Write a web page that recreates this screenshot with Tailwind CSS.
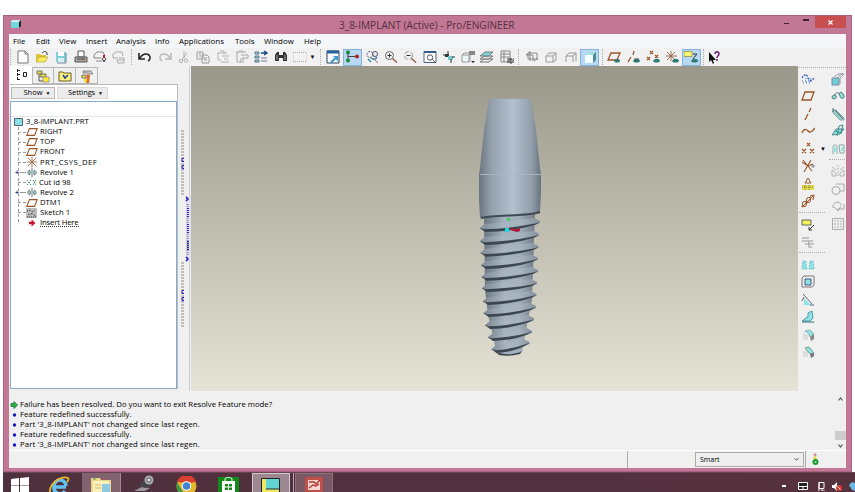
<!DOCTYPE html>
<html lang="en">
<head>
    <meta charset="UTF-8">
    <meta name="viewport" content="width=device-width, initial-scale=1.0">
    <title>3_8-IMPLANT (Active) - Pro/ENGINEER</title>
    <script src="https://cdn.jsdelivr.net/npm/@tailwindcss/browser@4"></script>
</head>
<body class="w-[855px] h-[492px] overflow-hidden bg-white pl-[3px] pt-[15px] font-['Open_Sans',sans-serif] text-[7.5px] leading-none text-black">
    <!-- Shared icons -->
    <svg class="hidden">
        <symbol id="plane" viewBox="0 0 14 14"><path d="M4 3h9l-3 8H1z" fill="none" stroke="#9a5528" stroke-width="1.3"/></symbol>
        <symbol id="revolve" viewBox="0 0 14 14"><path d="M7 1v12M4 4c-3 1-3 5 0 6l1-3zM10 4c3 1 3 5 0 6l-1-3z" fill="#a5dcdc" stroke="#42565a"/></symbol>
        <symbol id="csys" viewBox="0 0 14 14"><path d="M7 1v12M1 7h12M2 2l10 10M12 2L2 12" fill="none" stroke="#9a6040"/></symbol>
    </svg>

    <div class="w-[849px] h-[457px] bg-[#c27794] border border-[#a9617f] px-[5px]">
        <!-- Title bar -->
        <div class="flex h-[18px] relative">
            <svg class="w-[10px] h-[8px] mt-[4px] ml-[2px]" viewBox="0 0 10 8"><path d="M0 1h8v7H0z" fill="#6fd7da"/><path d="M0 1L2 0h8L8 2H0z" fill="#c8f2f2"/><path d="M8 2l2-2v6L8 8z" fill="#222"/></svg>
            <span class="absolute left-[330px] top-[4px] text-[10.1px] text-[#54303f] whitespace-nowrap">3_8-IMPLANT (Active) - Pro/ENGINEER</span>
            <div class="flex ml-auto mr-0">
                <span class="w-[5px] h-[1px] bg-[#402030] mt-[7px] mr-[14px]"></span>
                <span class="w-[6px] h-[2px] bg-[#402030] mt-[3px] mr-[6px]"></span>
                <span class="w-[31px] h-[12px] bg-[#c84f50] flex items-center justify-center">
                    <svg class="w-[5px] h-[5px]" viewBox="0 0 5 5"><path d="M.5.5l4 4M4.500.5l-4 4" stroke="#fff" stroke-width="1.2"/></svg>
                </span>
            </div>
        </div>

        <div class="w-[837px] h-[434px] bg-[#f0f0f0] flex flex-col">
            <!-- Menu -->
            <nav class="flex h-[14px] items-center bg-[#f5f6f8] pl-[4px] pt-px text-[7.9px] shrink-0">
                <span class="w-[23px]">File</span>
                <span class="w-[23px]">Edit</span>
                <span class="w-[27px]">View</span>
                <span class="w-[30px]">Insert</span>
                <span class="w-[39px]">Analysis</span>
                <span class="w-[24px]">Info</span>
                <span class="w-[56px]">Applications</span>
                <span class="w-[29px]">Tools</span>
                <span class="w-[40px]">Window</span>
                <span>Help</span>
            </nav>

            <!-- Toolbar -->
            <div class="flex h-[18px] items-center pl-px shrink-0 bg-[#f1f1f1] [&_svg]:w-[14px] [&_svg]:h-[14px] [&_svg]:shrink-0 [&_svg]:fill-none">
                <div class="h-[16px] w-[3px] border-l border-dotted border-[#aaa]"></div>
                <div class="grid grid-flow-col auto-cols-[19.3px] justify-items-center items-center">
                    <svg viewBox="0 0 14 14" stroke="#777"><path d="M2 1h7l3 3v9H2z" fill="#fff"/><path d="M9 1v3h3"/></svg>
                    <svg viewBox="0 0 14 14"><path d="M1 4h4l1 1h5v7H1z" fill="#e0c43c"/><path d="M1 12l3-5h9l-3 5z" fill="#f7ec5c" stroke="#b09a30" stroke-width=".6"/><path d="M7 3c2-2 4-2 5 0v2" stroke="#333"/></svg>
                    <svg viewBox="0 0 14 14"><path d="M2 2h10v10H2z" fill="#7ecfd6"/><path d="M4 2h6v4H4z" fill="#fff"/><path d="M4 8h6v4H4z" fill="#d8eef0"/><path d="M12 3v10H3" stroke="#789"/></svg>
                    <svg viewBox="0 0 14 14"><path d="M4 1h6v6H4z" fill="#fff" stroke="#555"/><path d="M1 7h12v5H1z" fill="#aaa" stroke="#555"/><path d="M3 9h8" stroke="#444"/><path d="M8 10h3" stroke="#c55"/></svg>
                    <svg viewBox="0 0 14 14"><path d="M1 5l3-3h6l2 4M1 5v3h7M3 11h6" stroke="#888"/><path d="M11 5v3" stroke="#b02020" stroke-width="2"/><path d="M9 8l2 4 2-4" stroke="#333"/></svg>
                    <svg viewBox="0 0 14 14" stroke="#aaa"><path d="M1 4l3-2h6l1 4M1 4v4h5M5 10h7v3H6zM7 8h5v2"/></svg>
                </div>
                <div class="h-[16px] w-[5px] ml-[2px] border-l border-dotted border-[#aaa]"></div>
                <div class="grid grid-flow-col auto-cols-[19.3px] justify-items-center items-center">
                    <svg viewBox="0 0 14 14"><path d="M1 3v6h6M2 8c2-4 6-5 9-3 2 2 1 5-1 6" stroke="#222" stroke-width="1.600"/></svg>
                    <svg viewBox="0 0 14 14"><path d="M13 3v6H7M12 8c-2-4-6-5-9-3-2 2-1 5 1 6" stroke="#b8b8b8" stroke-width="1.500"/></svg>
                    <svg viewBox="0 0 14 14" stroke="#b0b0b0"><path d="M7 1v7M10 3L5 10"/><circle cx="4" cy="11" r="1.700"/><circle cx="9" cy="10.500" r="1.700"/></svg>
                    <svg viewBox="0 0 14 14" stroke="#9c9c9c"><path d="M1 2h6v7H1zM6 5h5l2 2v6H6z" fill="#eee"/><path d="M8 8h3M8 10h3M3 4h2M3 6h2"/></svg>
                    <svg viewBox="0 0 14 14" stroke="#b4b4b4"><path d="M1 3h10M4 1h4v3M2 3v7h3M6 6h7M5 12h8M8 9h4"/></svg>
                    <svg viewBox="0 0 14 14" stroke="#a8a8a8"><path d="M1 2h10M2 2v10h4M6 5h7v3H7M6 8v5M8 8v5M4 1h4"/></svg>
                    <svg viewBox="0 0 14 14"><path d="M1 2h4v2H1zM1 6h4v2H1zM1 10h4v2H1z" fill="#9cd8dc" stroke="#578"/><path d="M7 3h5M10 1l3 2-3 2" stroke="#224a88" stroke-width="1.400"/><path d="M7 8h6M7 11h6" stroke="#779"/></svg>
                    <svg viewBox="0 0 14 14"><path d="M1 5l2-3h2v3h4V2h2l2 3v6H9V8H5v3H1z" fill="#333"/><path d="M3 5v5M11 5v5" stroke="#aaa"/></svg>
                    <svg viewBox="0 0 14 14"><path d="M0 2.500h14v9H0z" stroke="#aaa" stroke-dasharray="1 1"/></svg>
                </div>
                <div class="w-[11px] text-[6px] text-black">▼</div>
                <div class="h-[16px] w-[3px] border-l border-dotted border-[#aaa]"></div>
                <div class="grid grid-flow-col auto-cols-[19.3px] h-[18px] justify-items-center items-center">
                    <svg viewBox="0 0 14 14"><path d="M1 1h12v12H1z" fill="#f7fbff" stroke="#346"/><path d="M1 2h12" stroke="#2763a0" stroke-width="3"/><path d="M4 12l5-5-3-1h6v6l-2-3-4 4z" fill="#3c98cc"/></svg>
                    <div class="w-[19px] h-[17px] bg-[#b7d7f3] border border-[#84b3dc] grid place-items-center"><svg viewBox="0 0 14 14"><path d="M3 2v8M3 6.500h8" stroke="#444"/><circle cx="3" cy="2.500" r="2" fill="#178a36"/><circle cx="3" cy="10.500" r="2" fill="#178a36"/><circle cx="12" cy="6.500" r="2" fill="#b02222"/></svg></div>
                    <svg viewBox="0 0 14 14"><circle cx="5" cy="4.500" r="3" stroke="#557" stroke-dasharray="2 1"/><circle cx="10" cy="4" r="2.500" stroke="#557"/><path d="M3 9l3 3M6 8c3 2 4 2 6-1" stroke="#3888b8" stroke-width="1.500"/><path d="M8 8l5 5" stroke="#a77"/></svg>
                    <svg viewBox="0 0 14 14"><circle cx="5.500" cy="5.500" r="4" stroke="#666"/><path d="M3.500 5.500h4M5.500 3.500v4" stroke="#333"/><path d="M8.500 8.500l4.500 4" stroke="#97604c" stroke-width="1.500"/></svg>
                    <svg viewBox="0 0 14 14"><circle cx="5.500" cy="5.500" r="4" stroke="#999" stroke-dasharray="5 2"/><path d="M3.500 5.500h4" stroke="#333"/><path d="M8.500 8.500l4.500 4" stroke="#97604c" stroke-width="1.500"/></svg>
                    <svg viewBox="0 0 14 14"><path d="M1 1.500h12v11H1z" fill="#fff" stroke="#456688"/><path d="M1 2h12" stroke="#345c88" stroke-width="2"/><circle cx="7" cy="7.500" r="2.700" stroke="#555"/><path d="M9 9l4 4" stroke="#97604c"/></svg>
                    <svg viewBox="0 0 14 14"><path d="M3 4h4v3H3z" fill="#244"/><path d="M6 6h5v4H6z" fill="#74c8c8"/><path d="M6 1v4M9 9v4M1 5h3M13 7h-3" stroke="#333"/></svg>
                    <svg viewBox="0 0 14 14"><path d="M1 5h7v7H1z" fill="#e9f7f7" stroke="#999"/><path d="M1 5l2-2h6v7l-1 2" stroke="#999"/><path d="M8 1h6v4H8z" fill="#888"/><path d="M10 11h4l-2 2z" fill="#222"/></svg>
                    <svg viewBox="0 0 14 14" stroke="#777"><path d="M0 12l4-3h9l-4 3z" fill="#eee"/><path d="M0 9l4-3h9l-4 3z" fill="#ddd"/><path d="M0 6l5-4h8L9 6z" fill="#7ed4da"/></svg>
                    <svg viewBox="0 0 14 14" stroke="#888"><path d="M1 1h9v11H1zM1 4h9M1 7h9M4 1v11"/><path d="M8 8v5M10 8v5h2V9h-2M14 8v5" stroke="#333"/></svg>
                </div>
                <div class="h-[16px] w-[4px] ml-[2px] border-l border-dotted border-[#aaa]"></div>
                <div class="grid grid-flow-col auto-cols-[19.3px] h-[18px] justify-items-center items-center">
                    <svg viewBox="0 0 14 14" stroke="#888"><path d="M1 5h7v6M3 3v6h10M3 3h9v7M5 1v10M1 5l3-3M9 11l3-2"/></svg>
                    <svg viewBox="0 0 14 14" stroke="#999"><path d="M2 6h7v6H2zM2 6l3-3h7v7l-3 2M9 6l3-3"/></svg>
                    <svg viewBox="0 0 14 14" stroke="#999"><path d="M2 12V6h7v6M2 6l3-3h7M9 6l3-3v8"/></svg>
                    <div class="w-[19px] h-[17px] bg-[#b7d7f3] border border-[#84b3dc] grid place-items-center"><svg viewBox="0 0 14 14"><path d="M2 5h8v8H2z" fill="#f2ffff"/><path d="M2 5l3-3h8l-3 3z" fill="#a4dede"/><path d="M10 5l3-3v8l-3 3z" fill="#4d8c96"/></svg></div>
                </div>
                <div class="h-[16px] w-[3px] ml-[2px] border-l border-dotted border-[#aaa]"></div>
                <div class="grid grid-flow-col auto-cols-[19.3px] h-[18px] justify-items-center items-center">
                    <svg viewBox="0 0 14 14"><path d="M4 3h9l-3 7H1z" stroke="#9a5528" stroke-width="1.300"/><path d="M7 11c2-3 5-3 6 0-1 2-5 2-6 0z" fill="#287a72"/></svg>
                    <svg viewBox="0 0 14 14"><path d="M7 1L6 5M4 7l-3 5" stroke="#9a5528" stroke-width="1.300"/><path d="M6 11c2-3 6-3 7 0-1 2-6 2-7 0z" fill="#287a72"/><path d="M7 9h5" stroke="#555"/></svg>
                    <svg viewBox="0 0 14 14"><path d="M4 1l3 3M7 1L4 4M1 7l3 3M4 7l-3 3M9 5l3 3M12 5L9 8" stroke="#9a5528" stroke-width="1.200"/><path d="M7 11c2-3 6-3 7 0-1 2-6 2-7 0z" fill="#287a72"/></svg>
                    <svg viewBox="0 0 14 14"><path d="M6 1v10M1 6h11M2 2l8 8M10 2l-8 8" stroke="#9a6a50"/><path d="M7 11c2-3 6-3 7 0-1 2-6 2-7 0z" fill="#287a72"/></svg>
                    <div class="w-[19px] h-[17px] bg-[#b7d7f3] border border-[#84b3dc] grid place-items-center"><svg viewBox="0 0 14 14"><path d="M0 1.500h8v5H0z" fill="#fdf870" stroke="#8a8440" stroke-width=".7"/><path d="M9 4h4L9 9" stroke="#333"/><path d="M7 11c2-3 6-3 7 0-1 2-6 2-7 0z" fill="#287a72"/></svg></div>
                </div>
                <div class="h-[16px] w-[4px] ml-[2px] border-l border-dotted border-[#aaa]"></div>
                <svg viewBox="0 0 14 14"><path d="M2 2v10l2-2 2 4 1-1-1-3h3z" fill="#111"/><path d="M8 4c0-3 4-3 4 0 0 2-2 1.500-2 4M10 9v2" stroke="#70207a" stroke-width="1.500"/></svg>
            </div>

            <!-- Work area -->
            <div class="flex h-[325px] shrink-0">
                <!-- Model tree -->
                <aside class="w-[170px] pl-[1px] pr-px shrink-0">
                    <div class="flex h-[18px] items-end [&_svg]:w-[14px] [&_svg]:h-[14px] [&_svg]:fill-none">
                        <div class="w-[22px] h-[18px] bg-white grid place-items-center"><svg viewBox="0 0 14 14" stroke="#222"><path d="M3.500 1v12M3 2.500h4M3 6.500h4M3 11.500h4" stroke-dasharray="3 1"/><path d="M9.500 4.500h3v4h-3z"/></svg></div>
                        <div class="w-[22px] h-[17px] border border-[#b8b8b8] grid place-items-center"><svg viewBox="0 0 14 14"><path d="M1 2h5v3H1zM4 5h6v3H4z" fill="#e4d648" stroke="#776"/><path d="M7 8h6v5H7z" fill="#f8ec32" stroke="#a98"/><path d="M3 6v6h4" stroke="#555"/></svg></div>
                        <div class="w-[22px] h-[17px] border border-l-0 border-[#b8b8b8] grid place-items-center"><svg viewBox="0 0 14 14"><path d="M1 3h4l1 1h7v8H1z" fill="#f9f17a" stroke="#665c20"/><path d="M5 6l2 3 3-3" stroke="#2038a0" stroke-width="1.500"/></svg></div>
                        <div class="w-[22px] h-[17px] border border-l-0 border-[#b8b8b8] grid place-items-center"><svg viewBox="0 0 14 14"><path d="M3 2h8l2 3h-3L8 4H3z" fill="#ccc" stroke="#666" stroke-width=".7"/><path d="M2 6h4v3H2z" fill="#eadb42" stroke="#776"/><path d="M7 5l3 1-1 8H6z" fill="#e0682a"/><path d="M4 10h3v3H4z" fill="#f5da30"/></svg></div>
                    </div>
                    <div class="h-[305px] w-[168px] bg-white border-t border-r border-[#bbb] flex flex-col">
                        <div class="flex gap-[2px] pl-px pt-[2px] pb-[2px]">
                            <div class="w-[44px] h-[12px] bg-[#ececec] border border-[#b9b9b9] flex items-center justify-center gap-[3px] pl-[8px]">Show <span class="text-[5px]">▼</span></div>
                            <div class="w-[51px] h-[12px] bg-[#ececec] border border-[#dadada] flex items-center justify-center gap-[3px] pl-[6px] tracking-[-0.1px]">Settings <span class="text-[5px]">▼</span></div>
                        </div>
                        <div class="flex-1 w-[167px] border border-[#86acd0]">
                            <div class="h-[15px] border-b border-[#e3e7ec]"></div>
                            <ul class="relative text-[7.7px] [&_li]:flex [&_li]:items-center [&_li]:h-[10.1px] [&_li]:whitespace-nowrap [&_svg]:shrink-0">
                                <div class="absolute left-[7px] top-[10px] h-[95px] border-l border-dashed border-[#999]"></div>
                                <li class="pl-[3px]"><svg class="w-[9px] h-[8px] mr-[3px]" viewBox="0 0 9 8"><path d="M.5.5h8v7h-8z" fill="#8de0e4" stroke="#456870"/></svg>3_8-IMPLANT.PRT</li>
                                <li class="pl-[7px]"><i class="w-[8px] border-t border-dashed border-[#999]"></i><svg class="w-[12px] h-[12px] mr-[2px]"><use href="#plane"/></svg>RIGHT</li>
                                <li class="pl-[7px]"><i class="w-[8px] border-t border-dashed border-[#999]"></i><svg class="w-[12px] h-[12px] mr-[2px]"><use href="#plane"/></svg>TOP</li>
                                <li class="pl-[7px]"><i class="w-[8px] border-t border-dashed border-[#999]"></i><svg class="w-[12px] h-[12px] mr-[2px]"><use href="#plane"/></svg>FRONT</li>
                                <li class="pl-[7px] tracking-[0.45px]"><i class="w-[8px] border-t border-dashed border-[#999]"></i><svg class="w-[12px] h-[12px] mr-[2px]"><use href="#csys"/></svg>PRT_CSYS_DEF</li>
                                <li class="pl-[4px]"><b class="text-[7px] w-[5px] text-[#2a2a80]">+</b><i class="w-[6px] border-t border-dashed border-[#999]"></i><svg class="w-[12px] h-[11px] mr-[2px]"><use href="#revolve"/></svg>Revolve 1</li>
                                <li class="pl-[7px]"><i class="w-[8px] border-t border-dashed border-[#999]"></i><svg class="w-[12px] h-[9px] mr-px" viewBox="0 0 12 9"><path d="M1 2l4 5M5 2L1 7M7 2l3 5M10 2L7 7" stroke="#388078" stroke-dasharray="1.500 1"/></svg>Cut id 98</li>
                                <li class="pl-[4px]"><b class="text-[7px] w-[5px] text-[#2a2a80]">+</b><i class="w-[6px] border-t border-dashed border-[#999]"></i><svg class="w-[12px] h-[11px] mr-[2px]"><use href="#revolve"/></svg>Revolve 2</li>
                                <li class="pl-[7px]"><i class="w-[8px] border-t border-dashed border-[#999]"></i><svg class="w-[12px] h-[12px] mr-[2px]"><use href="#plane"/></svg>DTM1</li>
                                <li class="pl-[7px]"><i class="w-[8px] border-t border-dashed border-[#999]"></i><svg class="w-[11px] h-[10px] mr-[3px]" viewBox="0 0 11 10"><path d="M0 0h11v10H0z" fill="#bbb"/><path d="M1 3l3-1 2 2 3-2M2 6l2 1 2-2 3 3M1 9h9" stroke="#333" fill="none" stroke-dasharray="1 1"/></svg>Sketch 1</li>
                                <li class="pl-[17px]"><svg class="w-[8px] h-[8px] mr-[4px]" viewBox="0 0 9 8"><path d="M1 2.500h3V0l4.500 4L4 8V5.500H1z" fill="#c8142c"/></svg><span class="border-b border-dotted border-[#333] tracking-[-0.15px]">Insert Here</span></li>
                            </ul>
                        </div>
                    </div>
                </aside>

                <!-- Splitter -->
                <div class="w-[12px] flex shrink-0">
                    <svg class="w-[12px] h-[325px]" viewBox="179 66 12 325">
                        <path d="M182.500 130v66M182.500 262v66" stroke="#bebebe" stroke-width="3" stroke-dasharray="2 1"/>
                        <path d="M189.500 66v325" stroke="#c9ced6"/>
                        <path d="M186 196h5v66h-5z" fill="#dfdff0"/>
                        <path d="M187.500 204v52" stroke="#8a8aa8" stroke-width="2" stroke-dasharray="1 1"/>
                        <path d="M188 208v10M188 224v9M188 241v9" stroke="#2828a8" stroke-dasharray="1 1" stroke-width="2"/>
                        <path d="M186 197l2 2-2 2M186 257l2 2-2 2" stroke="#1515b0" stroke-width="1.500" fill="none"/>
                        <path d="M184 158.500h-2v3h2M184 165.500h-2v3h2M184 290.500h-2v3h2M184 297.500h-2v3h2" stroke="#2020b8" fill="none"/>
                    </svg>
                </div>

                <!-- Graphics window -->
                <div class="w-[607px] shrink-0 bg-linear-to-b from-[#9a988b] via-[#bfbdb0] to-[#e5e3d5]">
                    <svg class="w-[607px] h-[325px]" viewBox="191 66 607 325">
                        <defs>
                            <linearGradient id="metal">
                                <stop offset="0" stop-color="#687480"/><stop offset=".2" stop-color="#94a1ad"/><stop offset=".55" stop-color="#b3c1cf"/><stop offset=".85" stop-color="#919eaa"/><stop offset="1" stop-color="#68737e"/>
                            </linearGradient>
                            <linearGradient id="core">
                                <stop offset="0" stop-color="#6a7782"/><stop offset=".4" stop-color="#a5b3c0"/><stop offset=".7" stop-color="#a0aeba"/><stop offset="1" stop-color="#717d88"/>
                            </linearGradient>
                            <linearGradient id="lobe">
                                <stop offset="0" stop-color="#7d8994"/><stop offset=".4" stop-color="#a9b6c2"/><stop offset=".7" stop-color="#a6b3bf"/><stop offset="1" stop-color="#85919c"/>
                            </linearGradient>
                        </defs>
                        <path d="M484 216L485 290 488 315 494 340 496 353Q509 357 522 352L525 335 532 300 535 210z" fill="url(#core)"/>
                        <g id="threads"></g>
                        <path d="M479 174L541 174 541 192 540 212 C525 217 495 214 480 218L479 200z" fill="url(#metal)"/>
                        <path d="M489 99H531L536 130 540 168 541 174H479L480 168 484 130z" fill="url(#metal)"/>
                        <path d="M480 174.500H541" stroke="#a8b4c0"/>
                        <path d="M481 218C495 214 525 217 540 212" stroke="#414b54" stroke-width="2" fill="none"/>
                        <rect x="507" y="218" width="3" height="3" fill="#4cc860"/>
                        <rect x="505" y="228" width="4" height="4" fill="#20d8e4"/>
                        <path d="M510 228.500l7 .5 3-1v3l-3 1-7-2z" fill="#b01838"/>
                    </svg>
                </div>

                <!-- Feature toolbars -->
                <div class="flex w-[47px] ml-px border-t border-dotted border-[#aaa] mt-px pt-[2px] h-[300px] [&_svg]:w-[14px] [&_svg]:h-[14px] [&_svg]:fill-none">
                    <div class="w-[17px]">
                        <div class="grid auto-rows-[17.5px] place-items-center">
                            <svg viewBox="0 0 14 14" stroke="#3868b8"><path d="M1 6c3-5 5-4 6 0 1 3 4 3 6 0" stroke-width="1.300" stroke-dasharray="2 1"/><path d="M1 9h11M2 11h8M5 3v8M9 6v6" stroke-dasharray="1 2"/></svg>
                            <svg viewBox="0 0 14 14"><use href="#plane"/></svg>
                            <svg viewBox="0 0 14 14" stroke="#9a5528"><path d="M10 1L8 5M7 7l-3 6" stroke-width="1.300"/></svg>
                            <svg viewBox="0 0 14 14" stroke="#9a5528"><path d="M1 9C3 4 5 5 7 7s4 1 7-3" stroke-width="1.300"/></svg>
                            <svg viewBox="0 0 14 14" stroke="#9a5528"><path d="M6 1l3 3M9 1L6 4M1 7l4 4M5 7l-4 4M9 7l4 4M13 7l-4 4" stroke-width="1.200"/></svg>
                            <svg viewBox="0 0 14 14" stroke="#9a5528"><path d="M2 1l9 11M10 1L3 13M1 3l6 4 5-2" stroke-width="1.100"/><path d="M11 6h2v2h-2z" stroke="#888"/></svg>
                            <svg viewBox="0 0 14 14"><path d="M7 1L4 6h6z" stroke="#9a5528"/><path d="M1 8h12v5H1z" fill="#e4d94b"/><path d="M1 10h12M4 8v5M8 8v5" stroke="#84803a" stroke-dasharray="1 1"/></svg>
                            <svg viewBox="0 0 14 14" stroke="#9a5528"><path d="M1 13L13 1M2 8l4-1-1 5-4 1zM6 4l4-1-1 5-4 1zM9 2l4-1-1 5"/></svg>
                        </div>
                        <div class="w-[26px] h-[4px] mt-[2px] border-t border-dotted border-[#aaa]"></div>
                        <div class="grid auto-rows-[17.5px] place-items-center">
                            <svg viewBox="0 0 14 14"><path d="M1 2h9v5H1z" fill="#f4ef58" stroke="#666"/><path d="M13 7l-5 5M8 9v3h3" stroke="#333"/></svg>
                            <svg viewBox="0 0 14 14" stroke="#999"><path d="M1 3h7M1 6h11M4 9h9M8 6v5M7 12h4"/></svg>
                        </div>
                        <div class="w-[26px] h-[4px] mt-px border-t border-dotted border-[#aaa]"></div>
                        <div class="grid auto-rows-[17.5px] place-items-center">
                            <svg viewBox="0 0 14 14"><path d="M2 3h3v4l1 4H1zM9 3h3l1 8H8z" fill="#8ce4e6" stroke="#70c4c8" stroke-dasharray="2 1"/></svg>
                            <svg viewBox="0 0 14 14"><path d="M1 3l2-2h10v9l-2 2H1z" stroke="#777"/><path d="M4 4h6v6H4z" fill="#8ce4e6" stroke="#457"/></svg>
                            <svg viewBox="0 0 14 14"><path d="M3 5l7 7H3z" fill="#8ce4e6"/><path d="M2 1l9 10M1 8l2-4M9 12h4" stroke="#567"/></svg>
                            <svg viewBox="0 0 14 14"><path d="M7 7V3l4-2 1 7-3 3H1l5-4z" fill="#8ce4e6" stroke="#3a8890" stroke-width=".8"/><path d="M1 12h12" stroke="#286a74"/></svg>
                            <svg viewBox="0 0 14 14"><path d="M2 5l5 2v5H2z" fill="#ddd"/><path d="M4 3l5-1 4 4-4 3-2-4z" fill="#8ce4e6" stroke="#8aa" stroke-width=".8"/><path d="M9 9l4-3v5l-3 2z" fill="#888"/></svg>
                            <svg viewBox="0 0 14 14"><path d="M2 5l5 2v5H2z" fill="#ddd"/><path d="M4 3l4-1 5 6-4 1z" fill="#8ce4e6" stroke="#687" stroke-width=".8"/><path d="M9 9l4-1v3l-3 2z" fill="#777"/></svg>
                        </div>
                    </div>
                    <div class="w-[13px] pt-[76px] pl-[4px] text-[6px] text-black">▼</div>
                    <div class="w-[17px]">
                        <div class="grid auto-rows-[17.5px] place-items-center">
                            <svg viewBox="0 0 14 14"><path d="M1 6h7v7H1z" fill="#72d0d2" stroke="#78a"/><path d="M3 5l4-3h6l-4 4v6M6 6l6-5" stroke="#99a"/></svg>
                            <svg viewBox="0 0 14 14"><path d="M1 9c0-3 3-4 4-2s-1 4-4 2zM8 5c2-4 5 0 5 3-1 3-4 1-4-1z" fill="#8cdcd8" stroke="#577"/><path d="M3 7c2-4 4-4 6-2" stroke="#577"/></svg>
                            <svg viewBox="0 0 14 14"><path d="M2 3h3l8 8v2h-4L2 6z" fill="#96cfc6" stroke="#8aa"/><path d="M4 3l8 9M2 1v4" stroke="#567"/></svg>
                            <svg viewBox="0 0 14 14"><path d="M1 11l4-6h8l-4 5z" fill="#86e2e0" stroke="#588"/><path d="M6 12l2-10 4-1-2 8M4 7l7 2" stroke="#488"/></svg>
                            <svg viewBox="0 0 14 14"><path d="M2 12V5c0-3 4-3 4 0v7M8 3h5v8H9z" stroke="#89a8aa"/><path d="M3 5h2v5H3zM10 5h2v4h-2z" fill="#98e8e8"/></svg>
                        </div>
                        <div class="w-[16px] h-[4px] mt-px border-t border-dotted border-[#aaa]"></div>
                        <div class="grid auto-rows-[17.5px] place-items-center">
                            <svg viewBox="0 0 14 14" stroke="#b4b4b4"><path d="M7 1v12" stroke-dasharray="2 1"/><path d="M1 12V6l4 3v3zM13 12V6L9 9v3zM1 3l4 3M13 3L9 6"/></svg>
                            <svg viewBox="0 0 14 14" stroke="#aaa"><path d="M5 2h8v7H9"/><circle cx="5" cy="8.500" r="4"/></svg>
                            <svg viewBox="0 0 14 14" stroke="#aaa"><path d="M2 9C1 3 9 1 10 6M3 8l4 4 3-5M6 10h7V5"/></svg>
                            <svg viewBox="0 0 14 14" stroke="#aaa"><path d="M1.500 1.500h11v11h-11z"/><path d="M3 4h9M3 7h9M3 10h9" stroke-dasharray="2 1"/></svg>
                        </div>
                    </div>
                </div>
            </div>

            <!-- Messages -->
            <div class="flex h-[60px] shrink-0 border-b border-white">
                <ul class="flex-1 pt-[9px] pl-px text-[7.75px] [&_li]:h-[10px] [&_li]:flex [&_li]:items-center [&_li]:gap-[2px] [&_svg]:w-[8px] [&_svg]:h-[8px]">
                    <li><svg viewBox="0 0 8 8"><path d="M1 2.500h3V.5L7.500 4 4 7.500v-2H1z" fill="#29b34a" stroke="#145c22" stroke-width=".7"/></svg>Failure has been resolved. Do you want to exit Resolve Feature mode?</li>
                    <li><svg viewBox="0 0 8 8"><circle cx="4.500" cy="4" r="1.700" fill="#1a1ac0"/></svg>Feature redefined successfully.</li>
                    <li class="tracking-[0.1px]"><svg viewBox="0 0 8 8"><circle cx="4.500" cy="4" r="1.700" fill="#1a1ac0"/></svg>Part '3_8-IMPLANT' not changed since last regen.</li>
                    <li><svg viewBox="0 0 8 8"><circle cx="4.500" cy="4" r="1.700" fill="#1a1ac0"/></svg>Feature redefined successfully.</li>
                    <li class="tracking-[0.1px]"><svg viewBox="0 0 8 8"><circle cx="4.500" cy="4" r="1.700" fill="#1a1ac0"/></svg>Part '3_8-IMPLANT' not changed since last regen.</li>
                </ul>
                <div class="w-[11px] flex flex-col items-center pt-[6px]">
                    <svg class="w-[5px] h-[4px]" viewBox="0 0 5 4"><path d="M.5 3.500l2-2.500 2 2.500" fill="none" stroke="#555" stroke-width="1.200"/></svg>
                    <div class="w-[11px] h-[9px] bg-[#cdcdcd] mt-[30px]"></div>
                    <svg class="w-[5px] h-[4px] mt-[4px]" viewBox="0 0 5 4"><path d="M.5.5l2 2.500 2-2.500" fill="none" stroke="#555" stroke-width="1.200"/></svg>
                </div>
            </div>

            <!-- Status bar -->
            <div class="flex flex-1">
                <div class="w-[619px] border-r border-[#aaa]"></div>
                <div class="w-[109px] h-[15px] ml-[67px] mt-px border border-[#aaa] bg-[#eee] flex items-center justify-between pl-[4px] pr-[4px] text-[7px]">Smart
                    <svg class="w-[5px] h-[3px]" viewBox="0 0 5 3"><path d="M.5.5l2 1.500 2-1.500" fill="none" stroke="#555"/></svg>
                </div>
                <div class="w-[2px] border-r border-[#aaa]"></div>
                <svg class="w-[7px] h-[12px] ml-[6px] mt-[2px]" viewBox="0 0 7 12"><circle cx="3" cy="1.800" r="1.500" fill="#cc9690"/><circle cx="3" cy="5" r="1.700" fill="#e4d34a"/><circle cx="3.500" cy="9" r="3" fill="#1c9c30"/><circle cx="3.500" cy="9" r="1" fill="#a0e8a0"/></svg>
            </div>
        </div>
    </div>

    <!-- Windows taskbar -->
    <div class="relative flex items-start w-[852px] h-[20px] bg-linear-to-r from-[#4f303d] to-[#56313e] border-t border-[#6b4454] [&_svg]:overflow-hidden">
        <svg class="w-[18px] h-[15px] mt-[4px] ml-[8px]" viewBox="0 0 18 15"><path d="M0 2l8-1v7H0zM9 1l9-1v8H9zM0 8.500h8V16l-8-1zM9 8.500h9V17l-9-1z" fill="#fff"/></svg>
        <svg class="w-[22px] h-[17px] mt-[2px] ml-[19px]" viewBox="0 0 22 17"><path d="M18 12H6a6 6 0 0011 4M6 11a6 6 0 0112 0" fill="none" stroke="#63c1ef" stroke-width="3.500"/><path d="M2 17C1 9 13 0 20 3c1 1 0 3-1 4" fill="none" stroke="#e8bd2c" stroke-width="1.800"/></svg>
        <div class="w-[39px] h-[19px] ml-[12px] bg-[#80636f] border-r border-[#9f8590] flex justify-center">
            <svg class="w-[22px] h-[16px] mt-[4px]" viewBox="0 0 22 16"><path d="M1 1h9l1 2h10v13H1z" fill="#ead58a"/><path d="M3 4h16v12H3z" fill="#fbf1bb"/><path d="M12 7h8v9h-8z" fill="#8ec8e2"/><path d="M5 8h6M5 11h6" stroke="#cdb66a"/><path d="M3 2h3" stroke="#4a9a50"/><path d="M13 2h3" stroke="#c05040"/></svg>
        </div>
        <svg class="w-[22px] h-[17px] mt-[2px] ml-[13px]" viewBox="0 0 22 17"><path d="M0 16l8-4 8 1-5 3z" fill="#999"/><path d="M5 11l6-8 6 2 1 5-7 3z" fill="#44444b"/><circle cx="15" cy="5" r="4.500" fill="#aaa"/><circle cx="15" cy="5" r="2" fill="#eee" stroke="#555"/></svg>
        <svg class="w-[21px] h-[16px] mt-[3px] ml-[20px]" viewBox="0 0 21 16"><circle cx="10.500" cy="10" r="10" fill="#e2b72c"/><path d="M1 6a10 10 0 0119 0l-9 1z" fill="#d8402f"/><path d="M1 6l6 10H3C0 13 0 9 1 6z" fill="#3c9b46"/><circle cx="10.500" cy="10" r="4.800" fill="#fff"/><circle cx="10.500" cy="10" r="3.800" fill="#4386d0"/></svg>
        <svg class="w-[21px] h-[16px] mt-[3px] ml-[21px]" viewBox="0 0 21 16"><path d="M0 1h21v15H0z" fill="#128a18"/><path d="M7 5V3c0-2 7-2 7 0v2" stroke="#fff" fill="none"/><path d="M4 5h13v11H4z" fill="#fff"/><path d="M7 8h3v2.500H7zM11 8h3v2.500h-3zM7 11.500h3V14H7zM11 11.500h3V14h-3z" fill="#128a18"/></svg>
        <div class="w-[38px] h-[19px] ml-[13px] bg-[#9d8790] border-t border-x border-[#d5c8cd] flex justify-center">
            <svg class="w-[20px] h-[15px] mt-[4px]" viewBox="0 0 20 15"><path d="M.500.500h18V15H.500z" fill="#ece868" stroke="#222"/><path d="M5 1h13v10H5z" fill="#62d4d4"/><path d="M5 11h14" stroke="#222"/></svg>
        </div>
        <div class="w-[4px] h-[19px] border-r border-[#b8a4ad]"></div>
        <div class="w-[38px] h-[19px] ml-px bg-[#785965] border border-b-0 border-[#8e707c] flex justify-center">
            <svg class="w-[18px] h-[15px] mt-[3px]" viewBox="0 0 18 15"><path d="M0 0h18v15H0z" fill="#bd5048"/><path d="M3 3h12v10H3z" fill="#f3d8d2"/><path d="M4 5h5l2 2 4-4M4 11l4-3 3 1 3-2" stroke="#b3362d" fill="none" stroke-width="1.500"/></svg>
        </div>
        <div class="ml-auto flex items-center gap-[8px] h-[14px] mt-[6px]">
            <span class="w-[4px] h-[2px] bg-white mr-[4px]"></span>
            <svg class="w-[10px] h-[8px]" viewBox="0 0 10 8"><path d="M.5.5h9v7h-9z" fill="#222" stroke="#fff"/><path d="M0 4.500h10M5 4v3" stroke="#fff"/></svg>
            <svg class="w-[7px] h-[9px] ml-[2px]" viewBox="0 0 7 9"><path d="M1 .5h5v6H1z" fill="none" stroke="#fff"/><path d="M1 0v9M4 6v3h3" stroke="#fff" fill="none"/></svg>
            <svg class="w-[10px] h-[9px] -ml-px" viewBox="0 0 10 9"><path d="M0 3h2l3-3v9L2 6H0z" fill="#fff"/><circle cx="7" cy="6" r="3" fill="#d93830"/><path d="M5.500 4.500l3 3" stroke="#fff"/></svg>
            <svg class="w-[6px] h-[9px] -ml-px" viewBox="0 0 6 9"><path d="M0 3l3-3 3 1v8L3 8z" fill="#68b8e4"/></svg>
        </div>
    </div>

    <script>
    // left x, left y, right x, right y of every turn of the thread
    const turns = [
        [480, 228, 540, 222], [480, 241, 539, 234.7], [480.500, 252.700, 538.500, 247],
        [481, 265, 538, 258.700], [481.500, 276.700, 538, 271], [482, 288, 537, 283],
        [483, 301, 536.500, 294.700], [483.500, 313, 536, 307], [485, 325, 534, 319.300],
        [488, 337, 532, 331.700], [491.500, 349, 529.500, 343]
    ];
    let paths = '';
    turns.forEach(function([lx, ly, rx, ry]) {
        const mx = (lx + rx) / 2;
        paths += `<path d="M${lx} ${ly} L${lx + 5} ${ly - 4} Q${mx} ${ly - 6} ${rx - 6} ${ry - 4} L${rx} ${ry - 1} L${rx} ${ry + 1} L${rx - 5} ${ry + 3} Q${mx} ${ly + 1} ${lx + 5} ${ly + 2} L${lx} ${ly + 1} Z" fill="url(#lobe)"/>`;
        paths += `<path d="M${lx} ${ly} L${lx + 4} ${ly + 1.3} Q${mx} ${ly + 0.5} ${rx - 5} ${ry + 1.5} L${rx} ${ry} L${rx - 5} ${ry + 3} Q${mx + 2} ${ly + 3.5} ${lx + 5} ${ly + 4} Z" fill="#3c464f"/>`;
    });
    paths += '<path d="M496 352C503 355 516 355 522 351L520 354Q509 357 499 355z" fill="#3c464f"/>';
    document.getElementById('threads').innerHTML = paths;
    </script>
</body>
</html>
